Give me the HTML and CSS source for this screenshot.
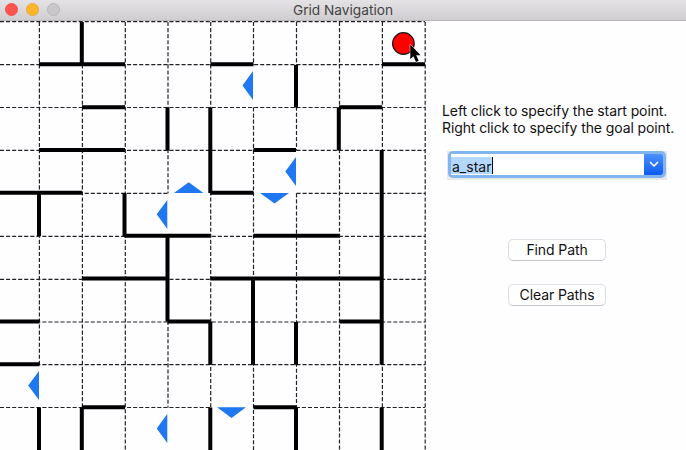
FILE: index.html
```
<!DOCTYPE html>
<html lang="en">
<head>
<meta charset="utf-8">
<title>Grid Navigation</title>
<link rel="stylesheet" href="styles.css">
</head>
<body>
<div class="window">
  <header class="titlebar">
    <div class="lights"><span class="light close"></span><span class="light minimize"></span><span class="light zoom"></span></div>
    <h1 class="title">Grid Navigation</h1>
  </header>
  <main class="content">
    <svg class="maze" width="430" height="429" viewBox="0 21 430 429">
      <g class="grid">
        <path d="M0 21.6H425M0 64.6H425M0 107.5H425M0 150.400H425M0 193.400H168M211 193.400H253.500M296.500 193.400H425M0 236.400H425M0 279.300H425M0 322H425M0 364.600H425M0 407.500H211M253.500 407.500H425"/>
        <path d="M39.400 22V364.700M39.400 407.500V450M82.400 22V450M125.300 22V450M168 22V193.300M168 236.300V407.500M210.700 22V450M253.500 22V64.700M253.500 107.500V450M296.500 22V150.400M296.500 193.300V450M339.500 22V450M382.400 22V450M425.200 22V450"/>
      </g>
      <path class="walls" d="M81.800 22V64.200M39 64.200H125M210.500 64.200H253.500M382 64.200H425M296 65V107.500M82 107.200H125M339 107.200H382M338.800 107.200V150.500M167.500 107.500V150.500M210.300 107.500V193M39 150H125M253.500 150H296M381.700 150V364.700M0 192.800H82M210.300 192.800H253.500M39 193V236M124.500 193V236M124.500 235.700H210.500M253.500 235.700H339.500M167.500 236V321.500M82 278.500H168M210.500 278.500H382M253 279V364.700M0 321.400H39.500M167.500 321.400H210.500M210.300 321.400V364.700M296 321.900V364.700M339.500 321.400H382M0 364.200H39.500M82 407.200H125M253.500 407.200H296M39 407.500V450M81.800 407.200V450M210.300 407.500V450M296 407.200V450M381.700 407.500V450"/>
      <path class="arrows" d="M253 71V100L242.500 85.500ZM296 157V186L285.300 171.500ZM167.300 200V229L156.700 214.300ZM39 371V400L28.200 385.500ZM167.300 414V443L156.700 428.500ZM174 193H203.500L188.700 182.300ZM260 193H289L274.500 203.500ZM217 407.300H246L231.500 418Z"/>
      <circle class="start" cx="403.400" cy="43.500" r="10.800"/>
      <path class="cursor" d="M410.300 44.500V59.300L413.400 56.300L416 62L418.700 60.800L416.200 55.300H420.600Z"/>
    </svg>
    <aside class="panel">
      <p class="hint"><span class="line">Left click to specify the start point.</span><span class="line">Right click to specify the goal point.</span></p>
      <div class="field">
        <div class="combo"><span class="value">a_star</span><span class="drop"><svg width="10" height="7" viewBox="0 0 10 7"><path d="M1.500 1.500L5 5L8.500 1.500"/></svg></span></div>
      </div>
      <button class="button">Find Path</button>
      <button class="button">Clear Paths</button>
    </aside>
  </main>
</div>
</body>
</html>
```
FILE: styles.css
```
* { box-sizing: border-box; }
body { margin: 0; font-family: Inter, "Liberation Sans", sans-serif; color: #111; }
.window { width: 686px; height: 450px; overflow: hidden; background: #fefdff; }
.titlebar { height: 21px; display: grid; grid-template-columns: 70px 1fr 70px; background: linear-gradient(#e4e2e4, #cfcdcf); border-bottom: 1px solid #b9b7b9; }
.lights { display: flex; gap: 8.400px; padding: 3px 0 0 4.500px; }
.light { width: 13px; height: 13px; border-radius: 50%; border: 1px solid; }
.close { background: #ff544e; border-color: #ed514c; }
.minimize { background: #fdb62b; border-color: #e9a83a; }
.zoom { background: #c9c7c9; border-color: #b8b6b8; }
.title { margin: 0; font-size: 13.700px; font-weight: 400; line-height: 20px; text-align: center; color: #444; }
.content { display: flex; height: 429px; }
.maze { display: block; flex: none; }
.grid path { fill: none; stroke: #222; stroke-width: 1.200; stroke-dasharray: 4.100 1.950; }
.walls { fill: none; stroke: #000; stroke-width: 4; }
.arrows { fill: #1f78f2; }
.start { fill: #f00; stroke: #171717; stroke-width: 1.200; }
.cursor { fill: #000; stroke: #fff; stroke-width: 1; paint-order: stroke; }
.panel { flex: 1; display: flex; flex-direction: column; padding: 81px 0 0 12px; }
.hint { margin: 0 0 15px; font-size: 14px; line-height: 17px; letter-spacing: -0.1px; white-space: nowrap; }
.line { display: block; }
.field { width: 220px; height: 29px; margin-left: 5px; padding: 0 1px 2px; background: #e9e8ea; }
.combo { display: flex; width: 218px; height: 27px; padding: 3px; border-radius: 5px; background: #80b5f0; }
.value { flex: 1; font-size: 14px; line-height: 26px; height: 21px; padding-left: 1px; background: linear-gradient(#b4d8fd, #b4d8fd) 0 3px / 41px 17px no-repeat, linear-gradient(#111, #111) 41px 3px / 1px 17px no-repeat, #fff; }
.drop { width: 19px; display: flex; align-items: center; justify-content: center; border-radius: 0 3px 3px 0; background: linear-gradient(#4b90fa, #0d5cf3); }
.drop path { fill: none; stroke: #fff; stroke-width: 1.700; stroke-linecap: round; stroke-linejoin: round; }
.button { width: 98px; height: 22px; margin: 59px 0 0 66px; padding: 0; border: 1px solid #dddce0; border-bottom-color: #c4c3c7; border-radius: 5px; background: #fff; font: 14px/20px Inter, sans-serif; letter-spacing: -0.1px; color: #111; }
.button + .button { margin-top: 23px; }
```
